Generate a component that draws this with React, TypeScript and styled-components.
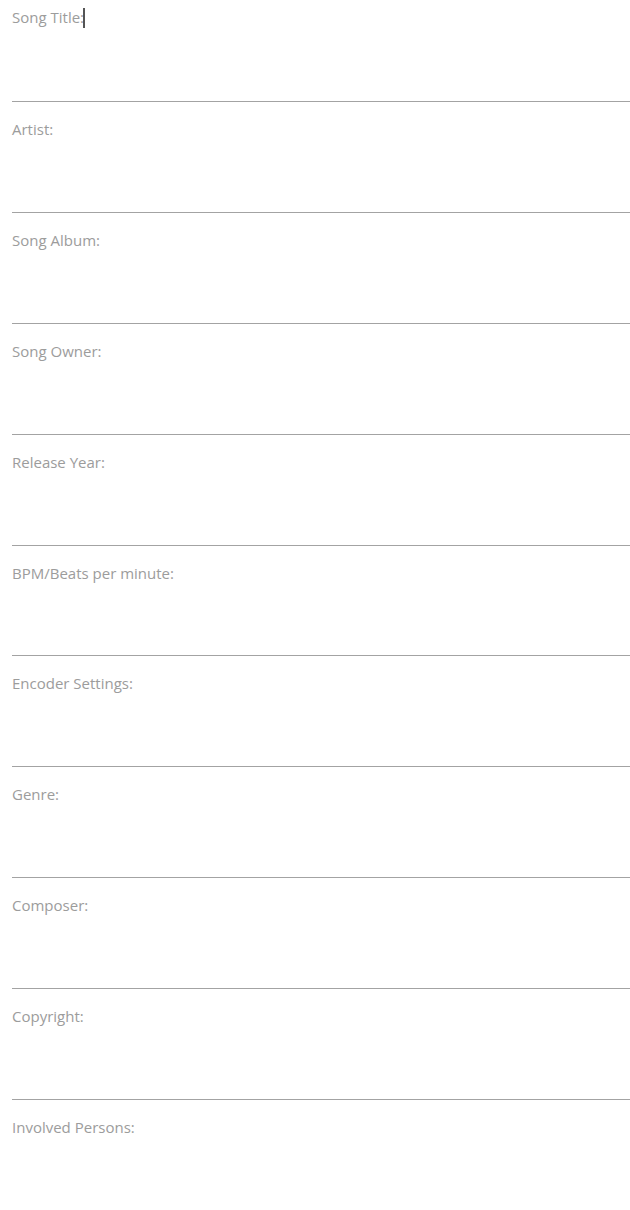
import React from "react";
import styled, { createGlobalStyle } from "styled-components";

const Global = createGlobalStyle`
  html, body { margin: 0; padding: 0; background: #ffffff; }
  body { font-family: "Open Sans", "Noto Sans", sans-serif; }
`;

const Form = styled.div`
  display: flex;
  flex-direction: column;
  padding-left: 12px;
  width: 618px;
`;

const Field = styled.div<{ $first?: boolean; $last?: boolean }>`
  box-sizing: border-box;
  height: ${(p) => (p.$first ? "102px" : "110.88px")};
  padding-top: ${(p) => (p.$first ? "6px" : "16px")};
  border-bottom: ${(p) => (p.$last ? "none" : "1px solid #a3a3a3")};
  flex-shrink: 0;
`;

const Label = styled.span`
  position: relative;
  display: inline-block;
  font-size: 15px;
  line-height: 22px;
  color: #9c9c9c;
`;

const Caret = styled.span`
  position: absolute;
  right: -1px;
  top: 2px;
  width: 2px;
  height: 20px;
  background: #555;
`;

const labels = [
  "Song Title:",
  "Artist:",
  "Song Album:",
  "Song Owner:",
  "Release Year:",
  "BPM/Beats per minute:",
  "Encoder Settings:",
  "Genre:",
  "Composer:",
  "Copyright:",
  "Involved Persons:",
];

export default function App() {
  return (
    <>
      <Global />
      <Form>
        {labels.map((l, i) => (
          <Field key={l} $first={i === 0} $last={i === labels.length - 1}>
            <Label>
              {l}
              {i === 0 && <Caret />}
            </Label>
          </Field>
        ))}
      </Form>
    </>
  );
}
